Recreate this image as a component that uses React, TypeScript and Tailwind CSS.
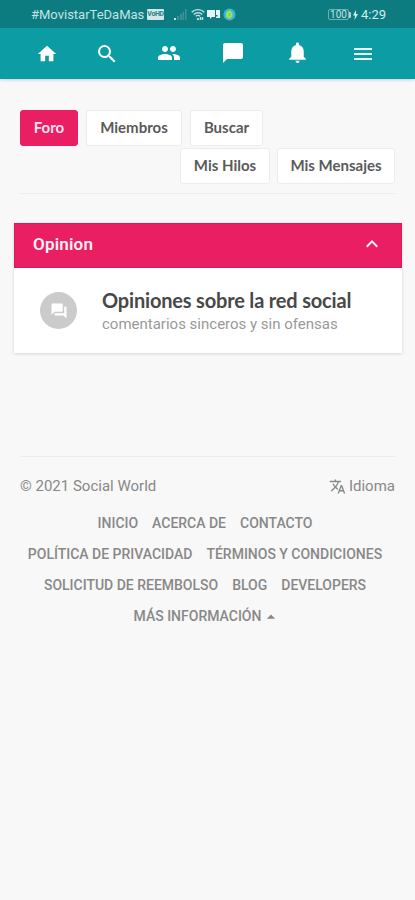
import type { ReactNode } from "react";
import clsx from "clsx";
import {
  MdArrowDropUp,
  MdChatBubble,
  MdForum,
  MdHome,
  MdKeyboardArrowUp,
  MdMenu,
  MdNotifications,
  MdPeople,
  MdSearch,
  MdTranslate,
} from "react-icons/md";

const footerRows = [
  ["Inicio", "Acerca de", "Contacto"],
  ["Política de privacidad", "Términos y condiciones"],
  ["Solicitud de reembolso", "Blog", "Developers"],
];

function StatusBar() {
  return (
    <div className="flex h-7 items-center bg-[#0c7c81] pl-[31px] pr-[29px] pt-px text-[#c4e2e3]">
      <span className="w-[114px] whitespace-nowrap text-[13px]">
        #MovistarTeDaMas
      </span>
      <span className="ml-[2px] flex h-[11px] w-[17px] items-center justify-center rounded-[1px] bg-[#cfe8e9] text-[7px] font-bold leading-none tracking-[-0.4px] text-[#2b7f85]">
        VoHD
      </span>
      {/* Signal */}
      <svg className="ml-[10px] h-[13px] w-[13px]" viewBox="0 0 13 13" fill="#3f9196">
        <rect x="0" y="10" width="2" height="2" fill="#c4e2e3" />
        <rect x="3" y="8" width="2" height="4" />
        <rect x="6" y="6" width="2" height="6" />
        <rect x="8.500" y="4" width="1.500" height="8" />
        <rect x="11" y="1" width="1.500" height="11" />
      </svg>
      {/* Wifi */}
      <svg
        className="ml-[4px] h-[13px] w-[14px]"
        viewBox="0 0 14 13"
        fill="none"
        stroke="#c4e2e3"
        strokeWidth="1.400"
      >
        <path d="M.7 4.200C4 .8 10 .8 13.300 4.200M2.800 6.400c2.300-2.200 6.100-2.200 8.400 0M4.800 8.300c1.300-1.100 3.100-1.100 4.400 0" />
        <path d="M6 10.500l1 1 1-1M9.500 9v3M11.500 9v3" />
      </svg>
      {/* Chat notification */}
      <svg className="ml-[2px] h-[12px] w-[13px]" viewBox="0 0 13 12" fill="#e6f4f4">
        <path d="M0 1h8v7H5l-2 2V8H0z" />
        <path d="M9 1h4v8H9V7.500h1.500V6H9z" />
      </svg>
      {/* App notification */}
      <svg className="ml-[3px] h-[13px] w-[13px]" viewBox="0 0 13 13">
        <circle cx="6.500" cy="6.500" r="6" fill="#35b5e0" />
        <path d="M3 4.500L6.500 2l3 2.500v4L6.500 11 3 9z" fill="#a5dc55" />
        <path d="M5.500 5h2v3h-2z" fill="#7fd06a" />
      </svg>
      <div className="ml-auto flex items-center">
        <span className="flex h-[11px] w-[21px] items-center justify-center rounded-[2px] border border-[#6fb0b4] text-[10px] leading-none">
          100
        </span>
        <span className="h-[6px] w-[2px] rounded-r-[1px] bg-[#a9d2d4]" />
        <svg className="ml-[2px] h-[10px] w-[5px]" viewBox="0 0 5 10" fill="#d8eeee">
          <path d="M3 0L0 5.500h2L1.500 10 5 4H3z" />
        </svg>
        <span className="ml-[3px] w-[25px] whitespace-nowrap text-[13px] text-[#d5ecec]">
          4:29
        </span>
      </div>
    </div>
  );
}

function NavBar() {
  return (
    <nav className="flex h-[51px] items-center bg-[#0b9da3] pl-[36px] text-white shadow-[0_1px_3px_rgba(60,80,150,0.25)]">
      <MdHome className="size-[22px]" />
      <MdSearch className="ml-[37px] size-6" />
      <MdPeople className="mb-[2px] ml-[38px] size-6" />
      <MdChatBubble className="mb-[2px] ml-[40px] size-6" />
      <MdNotifications className="mb-[2px] ml-[40px] size-[25px]" />
      <MdMenu className="ml-[41px] mt-px size-6 text-[#e6f6f6]" />
    </nav>
  );
}

function TabButton({
  active,
  className,
  children,
}: {
  active?: boolean;
  className?: string;
  children: ReactNode;
}) {
  return (
    <button
      className={clsx(
        "flex h-9 items-center justify-center whitespace-nowrap rounded-[3px] border pb-px font-[Lato,sans-serif] text-[15px] font-bold",
        active
          ? "border-[#e91e63] bg-[#e91e63] text-[#fde3ec]"
          : "border-[#ececec] bg-white text-[#5a5a5a]",
        className
      )}
    >
      {children}
    </button>
  );
}

export default function App() {
  return (
    <div className="min-h-screen w-full bg-[#f8f8f8] font-[Roboto,sans-serif]">
      <header>
        <StatusBar />
        <NavBar />
      </header>

      <main className="pt-[31px]">
        <div className="mx-5 border-b border-[#ededed] pb-[9px]">
          <div className="flex gap-2">
            <TabButton active className="w-[58px]">Foro</TabButton>
            <TabButton className="w-[96px]">Miembros</TabButton>
            <TabButton className="w-[73px]">Buscar</TabButton>
          </div>
          <div className="mt-[2px] flex justify-end gap-[7px]">
            <TabButton className="w-[90px]">Mis Hilos</TabButton>
            <TabButton className="w-[118px]">Mis Mensajes</TabButton>
          </div>
        </div>

        <section className="ml-[14px] mr-[13px] mt-[29px] bg-white shadow-[0_1px_3px_rgba(0,0,0,0.14)]">
          <div className="flex h-[45px] items-center justify-between border border-[#e0185b] bg-[#e91e63] pl-[18px] pr-[17px] text-[#fff0f5]">
            <h2 className="pb-[2px] text-[17px] font-semibold tracking-[0.2px]">Opinion</h2>
            <MdKeyboardArrowUp className="mb-[3px] size-6" />
          </div>
          <div className="flex h-[85px] items-center pl-[26px]">
            <div className="flex size-[37px] items-center justify-center rounded-full bg-[#cbcbcb] text-white">
              <MdForum className="size-[18px]" />
            </div>
            <div className="ml-[25px] whitespace-nowrap pt-[3px]">
              <h3 className="font-[Lato,sans-serif] text-[20px] font-bold leading-6 tracking-[-0.18px] text-[#484848]">
                Opiniones sobre la red social
              </h3>
              <p className="text-[15px] leading-6 text-[#999]">
                comentarios sinceros y sin ofensas
              </p>
            </div>
          </div>
        </section>
      </main>

      <footer className="mx-5 mt-[103px] border-t border-[#ececec] pt-[18px] text-[#888]">
        <div className="flex h-[22px] items-center justify-between text-[15px]">
          <span>© 2021 Social World</span>
          <span className="flex items-center gap-[3px]">
            <MdTranslate className="size-[17px]" />
            Idioma
          </span>
        </div>
        <div className="mt-[11px] text-[14px] font-medium uppercase">
          {footerRows.map((row) => (
            <div key={row[0]} className="flex h-[31px] items-center justify-center gap-[14px] whitespace-nowrap pr-[5px] tracking-[-0.01px]">
              {row.map((label) => (
                <a key={label}>{label}</a>
              ))}
            </div>
          ))}
          <div className="flex h-[31px] items-center justify-center">
            <span>Más información</span>
            <MdArrowDropUp className="size-5" />
          </div>
        </div>
      </footer>
    </div>
  );
}
